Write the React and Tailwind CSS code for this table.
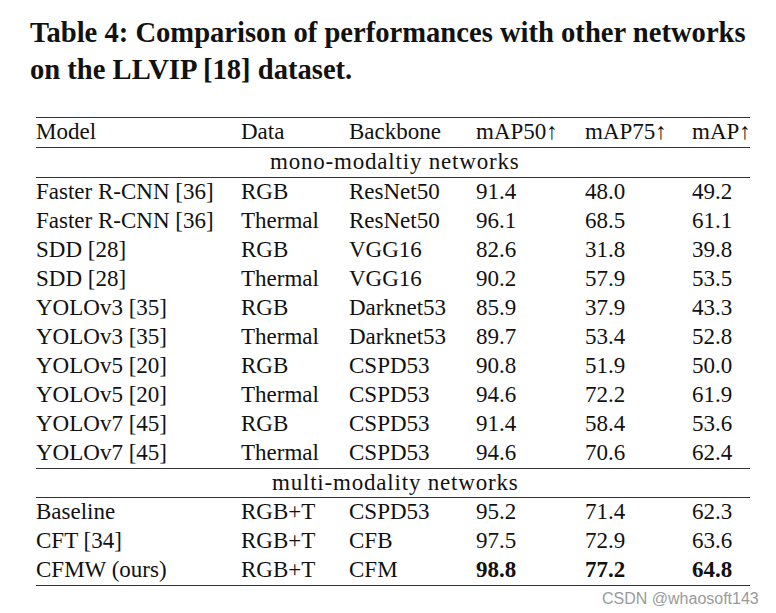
const mono = [
  ["Faster R-CNN [36]", "RGB", "ResNet50", "91.4", "48.0", "49.2"],
  ["Faster R-CNN [36]", "Thermal", "ResNet50", "96.1", "68.5", "61.1"],
  ["SDD [28]", "RGB", "VGG16", "82.6", "31.8", "39.8"],
  ["SDD [28]", "Thermal", "VGG16", "90.2", "57.9", "53.5"],
  ["YOLOv3 [35]", "RGB", "Darknet53", "85.9", "37.9", "43.3"],
  ["YOLOv3 [35]", "Thermal", "Darknet53", "89.7", "53.4", "52.8"],
  ["YOLOv5 [20]", "RGB", "CSPD53", "90.8", "51.9", "50.0"],
  ["YOLOv5 [20]", "Thermal", "CSPD53", "94.6", "72.2", "61.9"],
  ["YOLOv7 [45]", "RGB", "CSPD53", "91.4", "58.4", "53.6"],
  ["YOLOv7 [45]", "Thermal", "CSPD53", "94.6", "70.6", "62.4"],
];

const multi = [
  ["Baseline", "RGB+T", "CSPD53", "95.2", "71.4", "62.3"],
  ["CFT [34]", "RGB+T", "CFB", "97.5", "72.9", "63.6"],
  ["CFMW (ours)", "RGB+T", "CFM", "98.8", "77.2", "64.8", true],
];

const cols = "grid grid-cols-[205px_108px_127px_109px_107px_1fr]";

function Row({ cells, bold }) {
  return (
    <div className={`${cols} h-[29px] items-center pb-[1px]`}>
      {cells.slice(0, 6).map((c, i) => (
        <span key={i} className={bold && i >= 3 ? "font-bold" : ""}>
          {c}
        </span>
      ))}
    </div>
  );
}

export default function App() {
  return (
    <div
      className="relative w-[776px] h-[613px] bg-white text-[#111] overflow-hidden"
      style={{ fontFamily: '"Liberation Serif", "Times New Roman", serif' }}
    >
      {/* TITLE */}
      <div className="pl-[30px] pt-[14px] text-[28.6px] font-bold leading-[37px]">
        <div>Table 4: Comparison of performances with other networks</div>
        <div>on the LLVIP [18] dataset.</div>
      </div>

      {/* TABLE */}
      <div className="ml-[36px] mt-[29px] w-[714px] text-[23px] leading-[26px] border-t border-b border-[#333]">
        <div className={`${cols} h-[30px] items-center pb-[1px] border-b border-[#333]`}>
          <span>Model</span>
          <span>Data</span>
          <span>Backbone</span>
          <span>mAP50↑</span>
          <span>mAP75↑</span>
          <span>mAP↑</span>
        </div>
        <div className="h-[30px] flex items-center pb-[1px] border-b border-[#333] pl-[234px] tracking-[0.8px]">
          mono-modaltiy networks
        </div>
        {mono.map((r, i) => (
          <Row key={i} cells={r} />
        ))}
        <div className="h-[30px] flex items-center pb-[1px] border-t border-b border-[#333] pl-[236px] tracking-[0.8px]">
          multi-modality networks
        </div>
        {multi.map((r, i) => (
          <Row key={i} cells={r} bold={r[6]} />
        ))}
      </div>

      <div
        className="absolute left-[602px] top-[587px] text-[16px] text-[#9a9a9a]"
        style={{ fontFamily: '"Liberation Sans", Arial, sans-serif' }}
      >
        CSDN @whaosoft143
      </div>
    </div>
  );
}
